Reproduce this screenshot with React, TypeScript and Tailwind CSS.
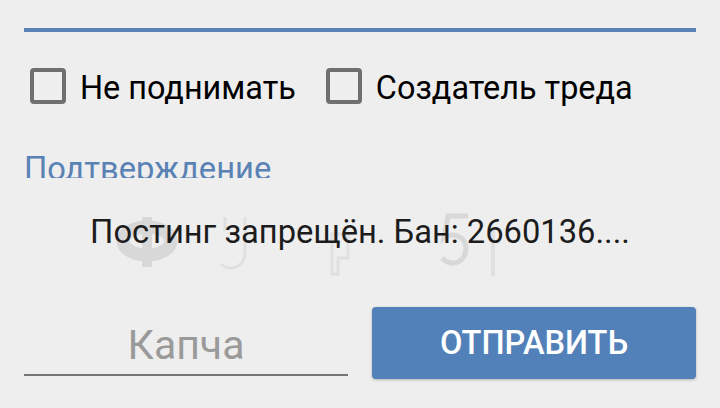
const font = "font-['Roboto',sans-serif]"

function Check({ label }: { label: string }) {
  return (
    <label className="flex items-center gap-[14px]">
      <span className="size-[36px] shrink-0 rounded-[4px] border-[4px] border-[#6f6f6f]" />
      <span className="relative top-[2px] text-[32.4px] leading-[36px] text-black">{label}</span>
    </label>
  )
}

export default function App() {
  return (
    <div className={`${font} h-[408px] w-[720px] overflow-hidden bg-[#eeeeee] px-[24px] pt-[28px]`}>
      <div className="h-[4px] bg-[#5a82b4]" />

      <div className="mt-[36px] flex gap-[30px] pl-[6px]">
        <Check label="Не поднимать" />
        <Check label="Создатель треда" />
      </div>

      <div className="mt-[46px] h-[28px] overflow-hidden text-[32.7px] leading-[38px] text-[#5a82b4]">Подтверждение</div>

      <div className="relative mt-[32px] h-[97px]">
        <svg className="absolute left-[86px] top-[2px]" width="400" height="70" viewBox="0 0 400 70" fill="none">
          <ellipse cx="37" cy="29" rx="24" ry="14" stroke="#d8d8d8" strokeWidth="13" />
          <path d="M37 5v50" stroke="#d8d8d8" strokeWidth="10" />
          <path d="M115 5v14M135 5v35c0 16-16 20-24 12" stroke="#e0e0e0" strokeWidth="3" />
          <path d="M222 62V22h16v24h-10v16z" stroke="#e0e0e0" strokeWidth="3" />
          <path d="M358 4h-20l-4 22c8-6 22-2 22 10 0 14-14 20-24 10" stroke="#d8d8d8" strokeWidth="5" />
          <path d="M383 15v49" stroke="#e0e0e0" strokeWidth="4" />
        </svg>
        <div className="relative pt-[3px] text-center text-[32.7px] leading-[38px] text-[#1c1c1c]">Постинг запрещён. Бан: 2660136....</div>
      </div>

      <div className="flex gap-[24px]">
        <div className="flex h-[69px] w-[324px] items-end justify-center border-b-2 border-[#757575] pb-[5px] text-[41px] leading-[48px] text-[#9a9a9a]">Капча</div>
        <button className="h-[72px] w-[324px] rounded-[4px] bg-[#5280b8] text-[32.6px] font-medium text-white shadow-[0_1px_3px_rgba(0,0,0,0.25)]">ОТПРАВИТЬ</button>
      </div>
    </div>
  )
}
